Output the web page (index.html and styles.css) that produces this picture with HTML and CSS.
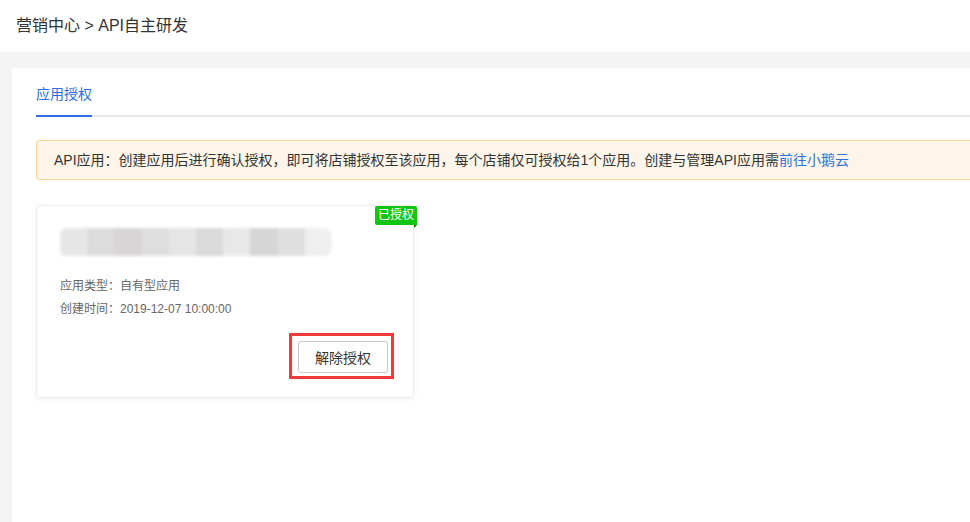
FILE: index.html
```html
<!DOCTYPE html>
<html lang="zh">
<head>
<meta charset="utf-8">
<title>API自主研发</title>
<link rel="stylesheet" href="styles.css">
</head>
<body>
<header class="topbar">
  <div class="crumbs">营销中心 &gt; API自主研发</div>
</header>
<main class="page">
  <section class="panel">
    <nav class="tabs">
      <div class="tab active">应用授权</div>
    </nav>
    <div class="notice">API应用：创建应用后进行确认授权，即可将店铺授权至该应用，每个店铺仅可授权给1个应用。创建与管理API应用需<a class="link" href="#">前往小鹅云</a></div>
    <div class="card">
      <span class="badge">已授权</span>
      <div class="blurred">
        <span class="blk b1"></span><span class="blk b2"></span><span class="blk b3"></span><span class="blk b4"></span><span class="blk b5"></span><span class="blk b6"></span><span class="blk b7"></span><span class="blk b8"></span><span class="blk b9"></span><span class="blk b10"></span>
      </div>
      <div class="meta">应用类型：自有型应用</div>
      <div class="meta">创建时间：2019-12-07 10:00:00</div>
      <div class="actions">
        <div class="highlight"><button class="btn">解除授权</button></div>
      </div>
    </div>
  </section>
</main>
</body>
</html>
```
FILE: styles.css
```css
* { box-sizing: border-box; }
html, body { margin: 0; padding: 0; }
body {
  width: 970px;
  height: 522px;
  overflow: hidden;
  background: #f4f4f5;
  font-family: "Liberation Sans", "Noto Sans CJK SC", sans-serif;
  color: #333;
}
.topbar {
  height: 52px;
  background: #fff;
  display: flex;
  align-items: center;
  padding-left: 16px;
}
.crumbs {
  font-size: 16px;
  color: #333;
  margin-top: -5px;
}
.page {
  padding: 16px 0 0 12px;
}
.panel {
  background: #fff;
  height: 470px;
  padding: 0 0 0 24px;
}
.tabs {
  display: flex;
  border-bottom: 2px solid #e5e7eb;
  height: 49px;
}
.tab {
  font-size: 14px;
  padding-top: 15px;
  height: 49px;
  margin-bottom: -2px;
  width: 56px;
}
.tab.active {
  color: #2d6fe0;
  border-bottom: 2px solid #2d6fe0;
}
.notice {
  margin-top: 23px;
  height: 40px;
  background: #fdf5e9;
  border: 1px solid #fcd49c;
  border-right: none;
  border-radius: 4px 0 0 4px;
  padding: 0 0 0 17px;
  font-size: 14px;
  line-height: 38px;
  color: #333;
  white-space: nowrap;
}
.link { color: #2d6fe0; text-decoration: none; }
.card {
  position: relative;
  margin-top: 25px;
  width: 378px;
  height: 193px;
  border: 1px solid #ececec;
  border-radius: 4px;
  box-shadow: 0 1px 6px rgba(0,0,0,0.06);
  padding: 22px 0 0 23px;
}
.badge {
  position: absolute;
  top: 0;
  right: -4px;
  height: 19px;
  padding: 0 3px;
  background: #11c611;
  color: #fff;
  font-size: 12px;
  line-height: 19px;
  border-radius: 2px 2px 0 2px;
}
.badge::after {
  content: "";
  position: absolute;
  right: 0;
  bottom: -3px;
  border-top: 3px solid #087a08;
  border-right: 3px solid transparent;
}
.blurred {
  display: flex;
  height: 28px;
  width: 272px;
  filter: blur(1.5px);
  opacity: 0.9;
}
.blk { flex: 1; height: 100%; background: #dcdcdc; }
.b1 { background: #e4e4e4; border-radius: 6px 0 0 6px; }
.b2 { background: #d9d9d9; }
.b3 { background: #d3d1d2; }
.b4 { background: #dbdbdb; }
.b5 { background: #e3e3e3; }
.b6 { background: #d6d6d6; }
.b7 { background: #e6e6e6; }
.b8 { background: #d2d2d2; }
.b9 { background: #dcdcdc; }
.b10 { background: #eeeeee; border-radius: 0 8px 8px 0; }
.meta {
  font-size: 12px;
  color: #666;
  line-height: 23px;
}
.blurred + .meta { margin-top: 19px; }
.actions {
  display: flex;
  justify-content: flex-end;
  padding-right: 19px;
  margin-top: 12px;
}
.highlight {
  border: 3px solid #f23a3a;
  padding: 5px 3px 3px 6px;
}
.btn {
  width: 90px;
  height: 32px;
  border: 1px solid #c8c8c8;
  border-radius: 3px;
  background: #fff;
  font-family: inherit;
  font-size: 14px;
  color: #333;
  padding: 0;
}
```
